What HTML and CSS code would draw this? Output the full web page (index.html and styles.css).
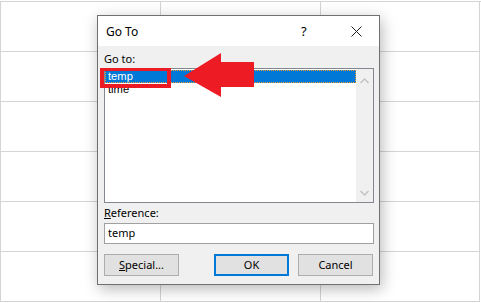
FILE: index.html
```html
<!DOCTYPE html>
<html lang="en">

<head>
    <meta charset="UTF-8">
    <meta name="viewport" content="width=device-width, initial-scale=1.0">
    <title>Go To</title>
    <link rel="stylesheet" href="styles.css">
</head>

<body>
    <div class="sheet">
        <div class="cell"></div><div class="cell"></div><div class="cell"></div>
        <div class="cell"></div><div class="cell"></div><div class="cell"></div>
        <div class="cell"></div><div class="cell"></div><div class="cell"></div>
        <div class="cell"></div><div class="cell"></div><div class="cell"></div>
        <div class="cell"></div><div class="cell"></div><div class="cell"></div>
        <div class="cell"></div><div class="cell"></div><div class="cell"></div>
    </div>

    <div class="dialog">
        <div class="titlebar">
            <span class="title">Go To</span>
            <span class="help">?</span>
            <span class="close">
                <svg width="11" height="11" viewBox="0 0 11 11">
                    <path d="M0.5 0.5 L10.5 10.5 M10.5 0.5 L0.5 10.5" stroke="#1a1a1a" stroke-width="1" fill="none" />
                </svg>
            </span>
        </div>

        <div class="content">
            <div class="label">Go to:</div>
            <div class="listbox">
                <div class="items">
                    <div class="item selected">temp</div>
                    <div class="item">time</div>
                </div>
                <div class="scrollbar">
                    <svg width="9" height="6" viewBox="0 0 9 6">
                        <path d="M0.5 5 L4.5 1 L8.5 5" stroke="#c2c2c2" stroke-width="1.4" fill="none" />
                    </svg>
                    <svg width="9" height="6" viewBox="0 0 9 6">
                        <path d="M0.5 1 L4.5 5 L8.5 1" stroke="#c2c2c2" stroke-width="1.4" fill="none" />
                    </svg>
                </div>
            </div>

            <div class="label ref-label"><u>R</u>eference:</div>
            <div class="field">temp</div>

            <div class="buttons">
                <div class="btn"><u>S</u>pecial...</div>
                <div class="spacer"></div>
                <div class="btn default">OK</div>
                <div class="btn">Cancel</div>
            </div>
        </div>
    </div>

    <!-- annotation over the dialog -->
    <div class="marker"></div>
    <svg class="arrow" width="71" height="45" viewBox="0 0 71 45">
        <polygon points="0,23 37,0 37,9 70,9 70,34 37,34 37,44" fill="#ed1c24" />
    </svg>
</body>

</html>
```

FILE: styles.css
```css
body {
    margin: 0;
    background-color: #fff;
    font-family: "Noto Sans", "Open Sans", sans-serif;
    font-size: 11px;
    color: #000;
    overflow: hidden;
}

.sheet {
    margin-top: 1px;
    display: grid;
    grid-template-columns: 160px 160px 159px;
    grid-auto-rows: 50px;
    border-top: 1px solid #d4d4d4;
    border-left: 1px solid #d4d4d4;
    width: 480px;
}

.cell {
    border-right: 1px solid #d4d4d4;
    border-bottom: 1px solid #d4d4d4;
}

.dialog {
    position: absolute;
    left: 97px;
    top: 15px;
    width: 283px;
    height: 270px;
    box-sizing: border-box;
    border: 1px solid #707070;
    background-color: #f0f0f0;
    box-shadow: 2px 4px 14px rgba(0, 0, 0, 0.28);
}

.titlebar {
    height: 30px;
    background-color: #fff;
    display: flex;
    align-items: center;
}

.title {
    margin-left: 8px;
    flex: 1;
    font-size: 12px;
}

.help {
    width: 20px;
    font-size: 13px;
    margin-right: 30px;
}

.close {
    display: flex;
    margin-right: 17px;
}

.content {
    padding: 5px 5px 0 6px;
}

.label {
    height: 16px;
    line-height: 16px;
    margin-bottom: 1px;
}

.listbox {
    height: 135px;
    box-sizing: border-box;
    border: 1px solid #828790;
    background-color: #fff;
    display: flex;
}

.items {
    flex: 1;
    padding-top: 1px;
}

.item {
    height: 13px;
    line-height: 13px;
    padding-left: 3px;
    font-family: "Liberation Sans", Arial, sans-serif;
    font-size: 11.2px;
}

.item.selected {
    background-color: #0078d7;
    color: #fff;
    outline: 1px dotted #f0a030;
    outline-offset: -1px;
}

.scrollbar {
    width: 17px;
    background-color: #f0f0f0;
    display: flex;
    flex-direction: column;
    justify-content: space-between;
    align-items: center;
    padding: 9px 0 6px;
}

.ref-label {
    margin-top: 2px;
    height: 17px;
}

.field {
    height: 21px;
    box-sizing: border-box;
    border: 1px solid #a0a0a0;
    background-color: #fff;
    line-height: 18px;
    padding-left: 3px;
}

.buttons {
    display: flex;
    margin-top: 10px;
    gap: 9px;
}

.spacer {
    width: 17px;
}

.btn {
    width: 75px;
    height: 22px;
    box-sizing: border-box;
    border: 1px solid #adadad;
    background-color: #e1e1e1;
    text-align: center;
    line-height: 19px;
}

.btn.default {
    border: 2px solid #0078d7;
    line-height: 17px;
}

.marker {
    position: absolute;
    left: 100px;
    top: 68px;
    width: 71px;
    height: 20px;
    box-sizing: border-box;
    border: 4px solid #ed1c24;
    border-top-width: 3px;
}

.arrow {
    position: absolute;
    left: 184px;
    top: 53px;
}
```
